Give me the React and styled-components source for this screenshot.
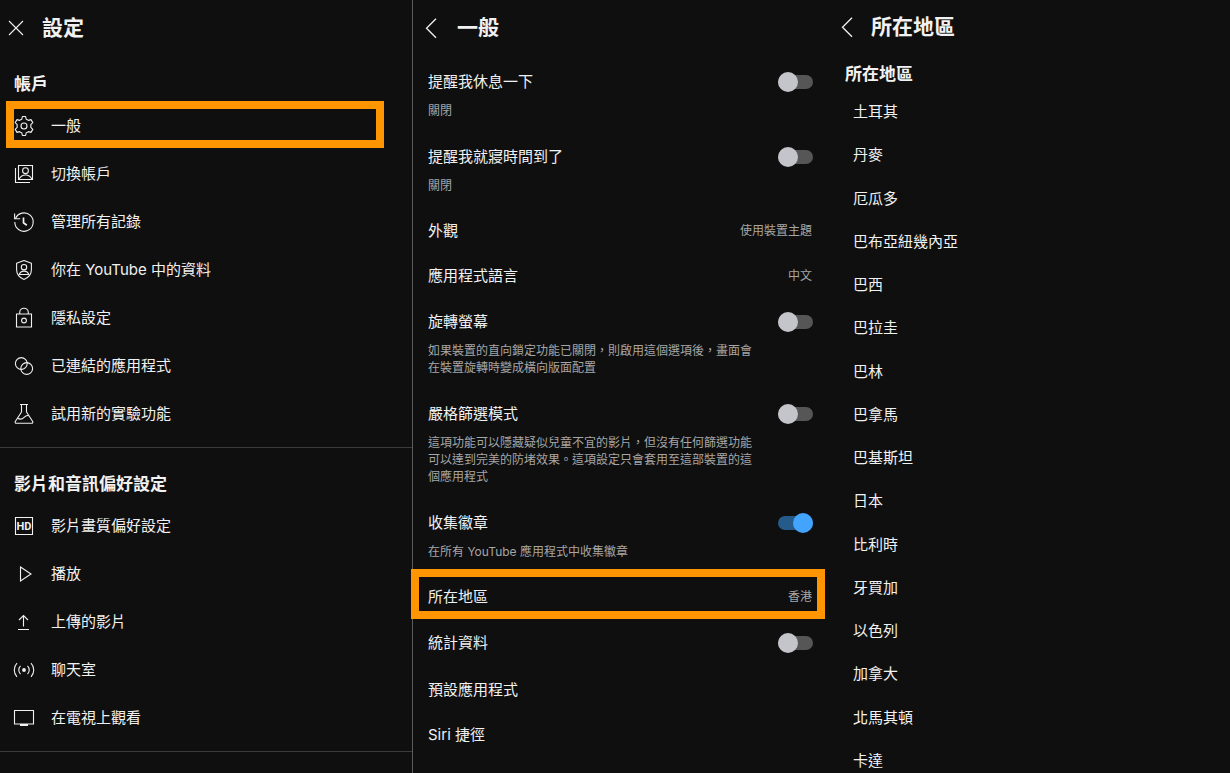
import React, { useState } from "react";
import styled, { createGlobalStyle, css } from "styled-components";

const COLORS = {
  background: "#0f0f0f",
  text: "#f1f1f1",
  muted: "#a6a6a6",
  divider: "#3b3b3b",
  columnLine: "#5c5c5c",
  highlight: "#ff9500",
  track: "#565656",
  knob: "#c4c4cb",
  trackOn: "#265a89",
  knobOn: "#42a4fc",
};

const GlobalStyle = createGlobalStyle`
  * {
    box-sizing: border-box;
  }

  body {
    margin: 0;
    background: ${COLORS.background};
    color: ${COLORS.text};
    font-family: Inter, "Noto Sans CJK TC", sans-serif;
    font-size: 15px;
    line-height: 20px;
  }
`;

/* ---------- icons ---------- */

const IconBase = styled.svg`
  display: block;
  flex: none;
  width: 24px;
  height: 24px;
  fill: none;
  stroke: currentColor;
  stroke-width: 1.1;
`;

const Icon = ({ children }) => (
  <IconBase viewBox="0 0 24 24" aria-hidden="true">
    {children}
  </IconBase>
);

const CloseIcon = () => (
  <Icon>
    <path d="M5 5l14 14M19 5L5 19" />
  </Icon>
);

const BackIcon = () => (
  <Icon>
    <path strokeWidth="1.3" d="M17 2.800L7.500 12.200l9.500 9.500" />
  </Icon>
);

const GearIcon = () => (
  <Icon>
    <circle cx="12" cy="12" r="3" />
    <path
      strokeLinejoin="round"
      d="M13.600 2.500l.6 2.700c.9.300 1.600.700 2.200 1.200l2.600-.8 1.800 3-2 2c.1.900.1 1.900 0 2.800l2 2-1.800 3-2.600-.8c-.6.500-1.300.900-2.200 1.200l-.6 2.700h-3.200l-.6-2.700c-.9-.300-1.600-.700-2.200-1.200l-2.600.8-1.800-3 2-2c-.1-.900-.1-1.900 0-2.800l-2-2 1.800-3 2.600.8c.6-.500 1.300-.900 2.200-1.200l.6-2.700z"
    />
  </Icon>
);

const AccountsIcon = () => (
  <Icon>
    <path d="M6.500 3.500h14v14h-14z" />
    <path d="M3.500 6v14.500H18" />
    <circle cx="13.500" cy="8.700" r="2.900" />
    <path d="M7 17.200c1.500-2.800 3.800-4.200 6.500-4.200s5 1.400 6.500 4.200" />
  </Icon>
);

const HistoryIcon = () => (
  <Icon>
    <path d="M3.400 8.800a9.200 9.200 0 1 1-.6 3.200" />
    <path d="M2.600 3.500v5.300h5.600" />
    <path strokeWidth="1.700" d="M11.500 7.500v5.300l3.300 2.400" />
  </Icon>
);

const ShieldIcon = () => (
  <Icon>
    <path
      strokeLinejoin="round"
      d="M12 2.600l7.400 2.600v6.300c0 4.700-3 8.200-7.400 9.900-4.400-1.700-7.400-5.200-7.400-9.900V5.200z"
    />
    <circle cx="12" cy="9.200" r="2.700" />
    <path d="M7.200 16.500c.7-2.200 2.500-3.400 4.800-3.400s4.100 1.200 4.800 3.400z" />
  </Icon>
);

const LockIcon = () => (
  <Icon>
    <path d="M4.500 8h15v13h-15z" />
    <path d="M7.700 8V6.500a4.300 4.300 0 0 1 8.600 0V8" />
    <circle cx="12" cy="14.500" r="2.400" />
  </Icon>
);

const LinkedIcon = () => (
  <Icon>
    <circle cx="9.300" cy="9.500" r="5.900" />
    <circle cx="14.700" cy="14.500" r="5.900" />
  </Icon>
);

const FlaskIcon = () => (
  <Icon>
    <path
      strokeLinejoin="round"
      d="M8 2.500h8M9.500 2.500v7.500L3.300 19.500c-.4.800 0 1.800 1 1.800h15.400c1 0 1.400-1 1-1.800L14.500 10V2.500"
    />
    <path d="M5.500 16.300c3 1.600 4.500 1.200 6.300-.6s3-2.800 5-1.900" />
  </Icon>
);

const HdText = styled.text`
  fill: currentColor;
  stroke: none;
  font: 700 11px Roboto, sans-serif;
  text-anchor: middle;
`;

const HdIcon = () => (
  <Icon>
    <path d="M3.500 3.500h17v17h-17z" />
    <HdText x="12" y="16">
      HD
    </HdText>
  </Icon>
);

const PlayIcon = () => (
  <Icon>
    <path d="M8.500 5l10.500 7-10.500 7z" />
  </Icon>
);

const UploadIcon = () => (
  <Icon>
    <path d="M6 19.500h11M11.500 16.500V5.500M7 10l4.500-4.500L16 10" />
  </Icon>
);

const LiveIcon = () => (
  <Icon>
    <circle cx="12" cy="12" r="1.900" fill="currentColor" stroke="none" />
    <path d="M8.500 7.800a6 6 0 0 0 0 8.400M15.500 7.800a6 6 0 0 1 0 8.400M5 5.200a9.800 9.800 0 0 0 0 13.600M19 5.200a9.800 9.800 0 0 1 0 13.600" />
  </Icon>
);

const TvIcon = () => (
  <Icon>
    <path d="M2.500 4.500h19v13.500h-19z" />
    <path strokeWidth="2" d="M8 19h8" />
  </Icon>
);

/* ---------- layout ---------- */

const Page = styled.div`
  display: grid;
  grid-template-columns: 413fr 412fr 405fr;
  min-height: 100vh;
`;

const Column = styled.section`
  display: flex;
  flex-direction: column;
  min-width: 0;
`;

const MenuColumn = styled(Column)`
  border-right: 1px solid ${COLORS.columnLine};
`;

const RegionColumn = styled(Column)`
  padding-left: 10px;
`;

const Header = styled.header`
  display: flex;
  align-items: center;
  gap: ${(p) => p.$gap}px;
  height: ${(p) => p.$height}px;
  padding: 8px 0 0 ${(p) => p.$inset}px;
`;

const Title = styled.h1`
  margin: 0;
  font-size: 21px;
  line-height: 24px;
  font-weight: 700;
`;

const SectionTitle = styled.h2`
  margin: 0;
  font-size: 17px;
  line-height: 24px;
  font-weight: 700;
`;

const PlainButton = styled.button`
  border: 0;
  padding: 0;
  background: none;
  color: inherit;
  font: inherit;
  text-align: left;
  cursor: pointer;
`;

/* marker frame drawn over a row */
const highlight = css`
  position: relative;

  &::after {
    content: "";
    position: absolute;
    inset: ${(p) => p.$highlight};
    border: 8px solid ${COLORS.highlight};
    pointer-events: none;
  }
`;

const MenuGroup = styled.div`
  padding: 24px 0 9px;
  border-bottom: 1px solid ${COLORS.divider};

  ${SectionTitle} {
    padding: 0 14px 6px;
  }
`;

const MenuRow = styled(PlainButton)`
  display: flex;
  align-items: center;
  gap: 15px;
  width: 100%;
  height: 48px;
  padding: 0 12px;
  ${(p) => p.$highlight && highlight}
`;

const SettingList = styled.div`
  padding-top: 10px;
`;

const ValueRow = styled(PlainButton)`
  display: flex;
  align-items: center;
  justify-content: space-between;
  width: 100%;
  height: 45px;
  padding: 0 13px 0 15px;
  ${(p) => p.$highlight && highlight}
`;

const Value = styled.span`
  color: ${COLORS.muted};
  font-size: 12px;
`;

const ToggleRow = styled.label`
  display: grid;
  grid-template-columns: 1fr 35px;
  column-gap: 18px;
  row-gap: 10px;
  padding: 14px 12px 14px 15px;
  cursor: pointer;
`;

const Description = styled.span`
  grid-row: 2;
  color: ${COLORS.muted};
  font-size: 12px;
  line-height: 17px;
`;

const Switch = styled.input`
  appearance: none;
  position: relative;
  width: 35px;
  height: 20px;
  margin: 0;
  cursor: pointer;

  &::before {
    content: "";
    position: absolute;
    inset: 3px 0;
    border-radius: 7px;
    background: ${COLORS.track};
  }

  &::after {
    content: "";
    position: absolute;
    top: 0;
    left: 0;
    width: 20px;
    height: 20px;
    border-radius: 50%;
    background: ${COLORS.knob};
  }

  &:checked::before {
    background: ${COLORS.trackOn};
  }

  &:checked::after {
    left: 15px;
    background: ${COLORS.knobOn};
  }
`;

const RegionHeading = styled(SectionTitle)`
  padding: 16px 0 0 10px;
`;

const RegionList = styled.ul`
  flex: 1;
  display: flex;
  flex-direction: column;
  justify-content: space-between;
  margin: 0;
  padding: 16px 0 2px 18px;
  list-style: none;
`;

const RegionButton = styled(PlainButton)`
  display: block;
`;

/* ---------- data ---------- */

const MENU = [
  {
    title: "帳戶",
    items: [
      { label: "一般", icon: GearIcon, highlight: "-1px 28px 2px 6px" },
      { label: "切換帳戶", icon: AccountsIcon },
      { label: "管理所有記錄", icon: HistoryIcon },
      { label: "你在 YouTube 中的資料", icon: ShieldIcon },
      { label: "隱私設定", icon: LockIcon },
      { label: "已連結的應用程式", icon: LinkedIcon },
      { label: "試用新的實驗功能", icon: FlaskIcon },
    ],
  },
  {
    title: "影片和音訊偏好設定",
    items: [
      { label: "影片畫質偏好設定", icon: HdIcon },
      { label: "播放", icon: PlayIcon },
      { label: "上傳的影片", icon: UploadIcon },
      { label: "聊天室", icon: LiveIcon },
      { label: "在電視上觀看", icon: TvIcon },
    ],
  },
];

const SETTINGS = [
  { label: "提醒我休息一下", toggle: true, description: "關閉" },
  { label: "提醒我就寢時間到了", toggle: true, description: "關閉" },
  { label: "外觀", value: "使用裝置主題" },
  { label: "應用程式語言", value: "中文" },
  {
    label: "旋轉螢幕",
    toggle: true,
    description:
      "如果裝置的直向鎖定功能已關閉，則啟用這個選項後，畫面會在裝置旋轉時變成橫向版面配置",
  },
  {
    label: "嚴格篩選模式",
    toggle: true,
    description:
      "這項功能可以隱藏疑似兒童不宜的影片，但沒有任何篩選功能可以達到完美的防堵效果。這項設定只會套用至這部裝置的這個應用程式",
  },
  {
    label: "收集徽章",
    toggle: true,
    on: true,
    description: "在所有 YouTube 應用程式中收集徽章",
  },
  { label: "所在地區", value: "香港", highlight: "-5px 0 0 -2px" },
  { label: "統計資料", toggle: true },
  { label: "預設應用程式" },
  { label: "Siri 捷徑" },
];

const REGIONS = [
  "土耳其",
  "丹麥",
  "厄瓜多",
  "巴布亞紐幾內亞",
  "巴西",
  "巴拉圭",
  "巴林",
  "巴拿馬",
  "巴基斯坦",
  "日本",
  "比利時",
  "牙買加",
  "以色列",
  "加拿大",
  "北馬其頓",
  "卡達",
];

const ToggleSetting = ({ label, description, on }) => {
  const [checked, setChecked] = useState(Boolean(on));

  return (
    <ToggleRow>
      <span>{label}</span>
      <Switch
        type="checkbox"
        checked={checked}
        onChange={(e) => setChecked(e.target.checked)}
      />
      {description && <Description>{description}</Description>}
    </ToggleRow>
  );
};

const App = () => (
  <>
    <GlobalStyle />
    <Page lang="zh-Hant">
      <MenuColumn>
        <Header $gap={14} $inset={4} $height={48}>
          <PlainButton aria-label="關閉">
            <CloseIcon />
          </PlainButton>
          <Title>設定</Title>
        </Header>
        {MENU.map((group) => (
          <MenuGroup key={group.title}>
            <SectionTitle>{group.title}</SectionTitle>
            {group.items.map(({ label, icon: ItemIcon, highlight }) => (
              <MenuRow key={label} $highlight={highlight}>
                <ItemIcon />
                <span>{label}</span>
              </MenuRow>
            ))}
          </MenuGroup>
        ))}
      </MenuColumn>

      <Column>
        <Header $gap={14} $inset={6} $height={48}>
          <PlainButton aria-label="返回">
            <BackIcon />
          </PlainButton>
          <Title>一般</Title>
        </Header>
        <SettingList>
          {SETTINGS.map(({ toggle, value, highlight, ...item }) =>
            toggle ? (
              <ToggleSetting key={item.label} {...item} />
            ) : (
              <ValueRow key={item.label} $highlight={highlight}>
                <span>{item.label}</span>
                {value && <Value>{value}</Value>}
              </ValueRow>
            )
          )}
        </SettingList>
      </Column>

      <RegionColumn>
        <Header $gap={12} $inset={0} $height={46}>
          <PlainButton aria-label="返回">
            <BackIcon />
          </PlainButton>
          <Title>所在地區</Title>
        </Header>
        <RegionHeading>所在地區</RegionHeading>
        <RegionList>
          {REGIONS.map((region) => (
            <li key={region}>
              <RegionButton>{region}</RegionButton>
            </li>
          ))}
        </RegionList>
      </RegionColumn>
    </Page>
  </>
);

export default App;
